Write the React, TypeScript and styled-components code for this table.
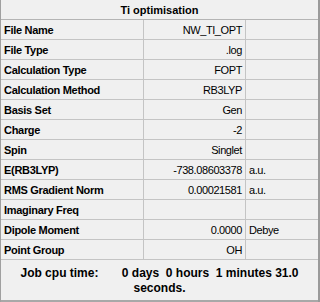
import styled, { createGlobalStyle } from "styled-components"

interface SummaryRow {
  label: string
  value?: string
  unit?: string
}

const rows: SummaryRow[] = [
  { label: "File Name", value: "NW_TI_OPT" },
  { label: "File Type", value: ".log" },
  { label: "Calculation Type", value: "FOPT" },
  { label: "Calculation Method", value: "RB3LYP" },
  { label: "Basis Set", value: "Gen" },
  { label: "Charge", value: "-2" },
  { label: "Spin", value: "Singlet" },
  { label: "E(RB3LYP)", value: "-738.08603378", unit: "a.u." },
  { label: "RMS Gradient Norm", value: "0.00021581", unit: "a.u." },
  { label: "Imaginary Freq" },
  { label: "Dipole Moment", value: "0.0000", unit: "Debye" },
  { label: "Point Group", value: "OH" },
]

const GlobalStyle = createGlobalStyle`
  html, body {
    margin: 0;
    padding: 0;
    background: #f0f0f0;
  }
`

// styles
const Panel = styled.div`
  box-sizing: border-box;
  width: 320px;
  height: 302px;
  background: #f0f0f0;
  border-left: 1px solid #a0a0a0;
  border-right: 2px solid #9a9a9a;
  font-family: "Liberation Sans", Arial, sans-serif;
  font-size: 11px;
  color: #000;
  display: flex;
  flex-direction: column;
`

const Title = styled.div`
  height: 19px;
  border-bottom: 1px solid #b4b4b4;
  display: flex;
  align-items: center;
  justify-content: center;
  font-weight: bold;
`

const Row = styled.div`
  display: grid;
  grid-template-columns: 142px 102px 1fr;
  height: 19px;
  border-bottom: 1px solid #c4c4c4;
`

const Cell = styled.div<{ $align?: "left" | "right"; $bold?: boolean }>`
  display: flex;
  align-items: center;
  justify-content: ${({ $align }) =>
    $align === "right" ? "flex-end" : "flex-start"};
  padding: 0 3px;
  font-weight: ${({ $bold }) => ($bold ? "bold" : "normal")};
  letter-spacing: ${({ $bold }) => ($bold ? "-0.3px" : "-0.4px")};
  white-space: nowrap;
  overflow: hidden;

  & + & {
    border-left: 1px solid #c4c4c4;
  }
`

const Footer = styled.div`
  flex: 1;
  border-bottom: 2px solid #a8a8a8;
  padding: 6px 8px 0;
  text-align: center;
  font-size: 12px;
  font-weight: bold;
  line-height: 15px;
  white-space: pre-wrap;
`

export default function App() {
  return (
    <>
      <GlobalStyle />
      <Panel>
        <Title>Ti optimisation</Title>
        {rows.map((row) => (
          <Row key={row.label}>
            <Cell $bold>{row.label}</Cell>
            <Cell $align="right">{row.value}</Cell>
            <Cell>{row.unit}</Cell>
          </Row>
        ))}
        <Footer>
          {"Job cpu time:       0 days  0 hours  1 minutes 31.0 seconds."}
        </Footer>
      </Panel>
    </>
  )
}
